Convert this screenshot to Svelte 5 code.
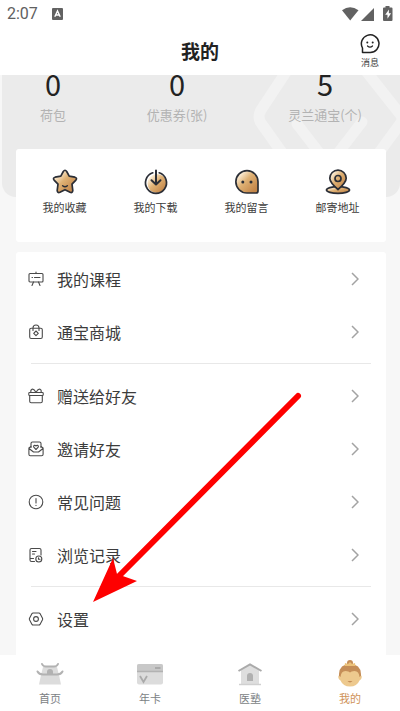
<script>
  // Saldos da conta
  const saldos = [
    { valor: 0, nome: '荷包' },
    { valor: 0, nome: '优惠券(张)' },
    { valor: 5, nome: '灵兰通宝(个)' }
  ];

  const atalhos = [
    { id: 'star', nome: '我的收藏' },
    { id: 'download', nome: '我的下载' },
    { id: 'ghost', nome: '我的留言' },
    { id: 'pin', nome: '邮寄地址' }
  ];

  // Cada grupo é separado por uma linha
  const grupos = [
    [
      { id: 'board', nome: '我的课程' },
      { id: 'bag', nome: '通宝商城' }
    ],
    [
      { id: 'gift', nome: '赠送给好友' },
      { id: 'mail', nome: '邀请好友' },
      { id: 'help', nome: '常见问题' },
      { id: 'history', nome: '浏览记录' }
    ],
    [{ id: 'settings', nome: '设置' }]
  ];

  const abas = [
    { id: 'home', nome: '首页' },
    { id: 'card', nome: '年卡' },
    { id: 'school', nome: '医塾' },
    { id: 'me', nome: '我的' }
  ];

  let abaAtiva = 'me';
</script>

<div class="app">
  <header>
    <div class="status">
      <span class="clock">2:07</span>
      <svg class="badge" width="11" height="12" viewBox="0 0 11 12">
        <rect width="11" height="12" rx="1" fill="#626262" />
        <path d="M2.8 8.7 5.5 3l2.7 5.7M3.8 7h3.4" fill="none" stroke="#fff" stroke-width="1.4" />
      </svg>
      <svg class="signals" width="52" height="16" viewBox="0 0 52 16">
        <path d="M1 4.2Q9 -1.6 17.5 4.2L9.2 14.5z" fill="#626262" />
        <path d="M33 2v13H20z" fill="#626262" />
        <path d="M44.500 0h4v1.500h2q1 0 1 1V14q0 1-1 1h-7.500q-1 0-1-1V2.500q0-1 1-1h1.500z" fill="#626262" />
        <path d="M48 3.500l-3.800 5.300h2.300v4l3.600-5.500h-2.300z" fill="#fff" />
      </svg>
    </div>
    <div class="titlebar">
      <h1>我的</h1>
      <button type="button" class="message">
        <svg width="20" height="20" viewBox="0 0 20 20" fill="none" stroke="#222" stroke-width="1.500">
          <path d="M2.500 18.500V14A8.800 8.800 0 1 1 10 18.500z" stroke-linejoin="round" />
          <path d="M7.500 12q2.500 2.300 5 0" stroke-width="1.200" stroke-linecap="round" />
          <circle cx="7.300" cy="8.500" r="1" fill="#222" stroke="none" />
          <circle cx="12.700" cy="8.500" r="1" fill="#222" stroke="none" />
        </svg>
        <span>消息</span>
      </button>
    </div>
  </header>

  <main>
    <section class="banner">
      <svg class="pattern" width="160" height="122" viewBox="240 75 160 122" fill="none" stroke="#f2f2f2" stroke-width="11" stroke-linejoin="round" stroke-linecap="round">
        <path d="M290 66 261 110q-4 7 0 13l44 62" />
        <path d="M362 66l38 48q4 5 0 10l-46 63" />
        <path d="M297 124l34 44M362 122l-34 44" />
      </svg>
      <div class="stats">
        {#each saldos as s}
          <div class="stat">
            <strong>{s.valor}</strong>
            <span>{s.nome}</span>
          </div>
        {/each}
      </div>
    </section>

    <section class="quick">
      {#each atalhos as a}
        <button type="button">
          <svg width="26" height="26" viewBox="0 0 26 26" fill="none" stroke="#2b2e36" stroke-width="1.700" stroke-linejoin="round" stroke-linecap="round">
            <defs>
              <linearGradient id={'g-' + a.id} x1="0" y1="0" x2="1" y2="1">
                <stop offset="0.150" stop-color="#fff3df" />
                <stop offset="0.450" stop-color="#dfb174" />
                <stop offset="0.850" stop-color="#c4874a" />
              </linearGradient>
            </defs>
            {#if a.id === 'star'}
              <path fill={`url(#g-${a.id})`} d="M11.300 2.500q1.700-2.500 3.400 0l2.500 4.700 5.700 1q2.600.8 1 2.900l-3.900 4.100.8 6.300q-.2 2.700-2.700 1.800L13 20.700l-5.100 2.600q-2.500.9-2.700-1.800l.8-6.300-3.900-4.100q-1.600-2.100 1-2.900l5.700-1z" />
              <path d="M10.600 16.800q2.400 2 4.800 0" stroke-width="1.400" />
            {:else if a.id === 'download'}
              <circle cx="14" cy="14.500" r="9.500" fill={`url(#g-${a.id})`} stroke="none" />
              <path d="M9.800 3.800A10.500 10.500 0 1 0 16.200 3.800" />
              <path d="M13 1.500v13.500M8.500 11.200l4.500 4.300 4.500-4.300" stroke-width="2" />
            {:else if a.id === 'ghost'}
              <path fill={`url(#g-${a.id})`} d="M13 1.700A11 11 0 1 0 13 24h9q2 0 2-2v-9A11 11 0 0 0 13 1.700z" />
              <circle cx="8.800" cy="13" r="1.500" fill="#2b2e36" stroke="none" />
              <circle cx="17" cy="13" r="1.500" fill="#2b2e36" stroke="none" />
            {:else}
              <ellipse cx="13" cy="21" rx="11.500" ry="3.400" fill={`url(#g-${a.id})`} />
              <path fill={`url(#g-${a.id})`} d="M13 20.500Q4.800 13.500 4.800 9.300a8.200 8.200 0 0 1 16.400 0Q21.200 13.500 13 20.500z" />
              <circle cx="13" cy="9.500" r="3" />
            {/if}
          </svg>
          <span>{a.nome}</span>
        </button>
      {/each}
    </section>

    <nav class="menu">
      {#each grupos as grupo}
        <ul>
          {#each grupo as item}
            <li>
              <button type="button">
                <svg class="icon" width="16" height="16" viewBox="0 0 16 16" fill="none" stroke="#4a4a4a" stroke-width="1.100" stroke-linejoin="round" stroke-linecap="round">
                  {#if item.id === 'board'}
                    <rect x="1" y="2.500" width="14" height="8.500" rx="1" />
                    <path d="M8 1v1.500M5.500 11 4 14.500M10.500 11l1.500 3.500M4 6.500h.5M6.500 6.500H12" />
                  {:else if item.id === 'bag'}
                    <path d="M3.200 4.300h9.600q1.500 0 1.500 1.500v7.200q0 1.500-1.500 1.500H3.200q-1.500 0-1.500-1.500V5.800q0-1.500 1.500-1.500z" />
                    <path d="M5 6.500V4a3 3 0 0 1 6 0v2.500M8 7l2.300 2.300L8 11.600 5.700 9.300z" />
                  {:else if item.id === 'gift'}
                    <rect x=".8" y="4.500" width="14.400" height="3" rx=".8" />
                    <path d="M1.700 7.500v5.700q0 1.500 1.500 1.500h9.600q1.500 0 1.500-1.500V7.500M8 4.500Q6 .5 4 1.300q-2 1.200-.8 3.200M8 4.500q2-4 4-3.200 2 1.200.8 3.200" />
                  {:else if item.id === 'mail'}
                    <path d="M3 6.500V2.500q0-1.500 1.500-1.500h7Q13 1 13 2.500v4" />
                    <path d="M3 5.500.9 7v6.200q0 1.500 1.500 1.500h11.200q1.500 0 1.500-1.500V7L13 5.500M1 7.500l4.500 3.500h5L15 7.500M8 8.500 5.800 6.200q-.6-1.400.7-1.900 1-.1 1.500.8.500-.9 1.500-.8 1.300.5.7 1.900z" />
                  {:else if item.id === 'help'}
                    <circle cx="8" cy="8" r="6.800" />
                    <path d="M8 4.500V9M8 11.300v.2" />
                  {:else if item.id === 'history'}
                    <path d="M6.500 14.500H3.500Q2 14.500 2 13V3q0-1.500 1.500-1.500h8Q13 1.500 13 3v5M4.500 4.500H8M4.500 7h2M2 11.500h3.500" />
                    <circle cx="10.800" cy="12" r="3" />
                    <path d="M10.500 10.800v1.400H12" />
                  {:else}
                    <path d="M5 2h6q.6 0 1 .6l2.500 4.700q.3.700 0 1.400L12 13.400q-.4.600-1 .6H5q-.6 0-1-.6L1.500 8.700q-.3-.7 0-1.400L4 2.600Q4.400 2 5 2z" />
                    <circle cx="8" cy="8" r="2.400" />
                  {/if}
                </svg>
                <span>{item.nome}</span>
                <svg class="chevron" width="8" height="14" viewBox="0 0 8 14" fill="none" stroke="#a3a3a3" stroke-width="1.500">
                  <path d="M1 1l6 6-6 6" />
                </svg>
              </button>
            </li>
          {/each}
        </ul>
      {/each}

      <svg class="pointer" width="210" height="212" viewBox="92 392 210 212">
        <path d="M298 396 117 578" stroke="#fe0000" stroke-width="6" stroke-linecap="round" />
        <path d="M93 602l20-44 4 16 20 7z" fill="#fe0000" />
      </svg>
    </nav>
  </main>

  <footer>
    {#each abas as aba}
      <button type="button" class:active={aba.id === abaAtiva} on:click={() => (abaAtiva = aba.id)}>
        <svg width="28" height="28" viewBox="0 0 28 28" fill="none">
          {#if aba.id === 'home'}
            <path d="M7 8h14l2 8 2 9.500H3L5 16z" fill="#dcdcdc" />
            <path d="M6 5q1 2.500 4 2.500h8q3 0 4-2.500M1.500 12.500Q3 15.500 7 15.500h14q4 0 5.500-3" stroke="#b2b2b2" stroke-width="2" stroke-linecap="round" />
            <path d="M11 15.500V13a3 3 0 0 1 6 0v2.500z" fill="#b2b2b2" />
          {:else if aba.id === 'card'}
            <rect x="1" y="5" width="26" height="20.500" rx="2" fill="#dcdcdc" />
            <path d="M1 12.500V7q0-2 2-2h22q2 0 2 2v5.500z" fill="#c8c8c8" />
            <path d="M1 12.500h26" stroke="#b2b2b2" stroke-width="1.500" />
            <path d="M19 9h5.500M4 17l3.500 6 3.500-6" stroke="#aaa" stroke-width="1.800" />
          {:else if aba.id === 'school'}
            <path d="M5 11l9-5 9 5v14H5z" fill="#dedede" />
            <path d="M3 25.500h22" stroke="#d0d0d0" stroke-width="1.500" />
            <path d="M2.500 12 14 5.300 25.500 12" stroke="#aaa" stroke-width="2" />
            <path d="M11 22v-5a3 3 0 0 1 6 0v5z" fill="#b0b0b0" />
          {:else}
            <circle cx="14" cy="4" r="3" fill="#c58e58" />
            <path d="M3 15Q3.500 5 14 5t11 10v3H3z" fill="#c58e58" />
            <path d="M8.500 7 9 4l3 1 2-2 2 2 3-1 .5 3z" fill="#ecc27a" />
            <path d="M4.500 18Q5 12 9.500 12q3.500 0 4.500 1.500 1-1.500 4.500-1.500 4.500 0 5 6l2-1.500q1 3-2 5-2.500 6-9.500 6t-9.500-6q-3-2-2-5z" fill="#edc98e" />
            <path d="M11.500 22h5q-2.500 2.800-5 0z" fill="#c58e58" />
          {/if}
        </svg>
        <span>{aba.nome}</span>
      </button>
    {/each}
  </footer>
</div>

<style>
  :global(body) { background: #f7f7f7; }

  .app { min-height: 100vh; display: flex; flex-direction: column; font-family: 'Noto Sans CJK SC', sans-serif; color: #3c3c3c; }
  button { border: none; background: transparent; padding: 0; margin: 0; font: inherit; color: inherit; cursor: pointer; }
  svg { display: block; flex: none; }

  header { background: #fff; position: relative; z-index: 1; }
  .status { display: flex; align-items: center; height: 27px; padding: 0 7px; }
  .clock { font-family: Roboto, sans-serif; font-size: 16px; color: #606060; }
  .badge { margin-left: 14px; }
  .signals { margin-left: auto; }
  .titlebar { display: grid; grid-template-columns: 1fr auto 1fr; align-items: center; height: 48px; padding: 0 20px; }
  h1 { grid-column: 2; margin: 0; font-size: 19px; line-height: 24px; font-weight: 700; color: #222; }
  .message { justify-self: end; display: flex; flex-direction: column; align-items: center; gap: 3px; font-size: 9px; line-height: 12px; }

  main { flex: 1; padding-left: 2px; }
  .banner { position: relative; height: 122px; background: #ebebeb; border-radius: 0 0 14px 14px; }
  .pattern { position: absolute; top: 0; right: 0; }
  .stats { position: relative; display: flex; justify-content: space-between; padding: 0 38px; }
  .stat { display: flex; flex-direction: column; align-items: center; }
  .stat strong { font-size: 29px; line-height: 40px; margin: -12px 0 2px; font-weight: 400; color: #222; }
  .stat span { font-size: 13px; line-height: 20px; color: #b3b3b3; }

  .quick { position: relative; display: grid; grid-template-columns: repeat(4, 1fr); margin: -48px 14px 10px; padding: 20px 3px 26px; background: #fff; border-radius: 3px; }
  .quick button { display: flex; flex-direction: column; align-items: center; gap: 3px; font-size: 11px; line-height: 18px; }

  .menu { position: relative; margin: 0 14px; padding-bottom: 10px; background: #fff; border-radius: 3px 3px 0 0; }
  ul { list-style: none; margin: 0; padding: 0 15px 0 12px; }
  ul + ul::before { content: ''; display: block; height: 1px; margin: 5px 0 5px 3px; background: #e8e8e8; }
  li button { display: flex; align-items: center; width: 100%; height: 53px; padding-right: 12px; text-align: left; font-size: 16px; line-height: 24px; }
  li .icon { margin-right: 13px; }
  .chevron { margin-left: auto; }

  /* Seta que aponta para as configurações */
  .pointer { position: absolute; left: 76px; top: 140px; pointer-events: none; }

  footer { display: grid; grid-template-columns: repeat(4, 1fr); background: #fff; }
  footer button { display: flex; flex-direction: column; align-items: center; height: 56px; padding-top: 4px; font-size: 11px; line-height: 16px; color: #7c7f84; }
  footer span { margin-top: 3px; }
  footer .active { color: #cf9257; }
</style>
